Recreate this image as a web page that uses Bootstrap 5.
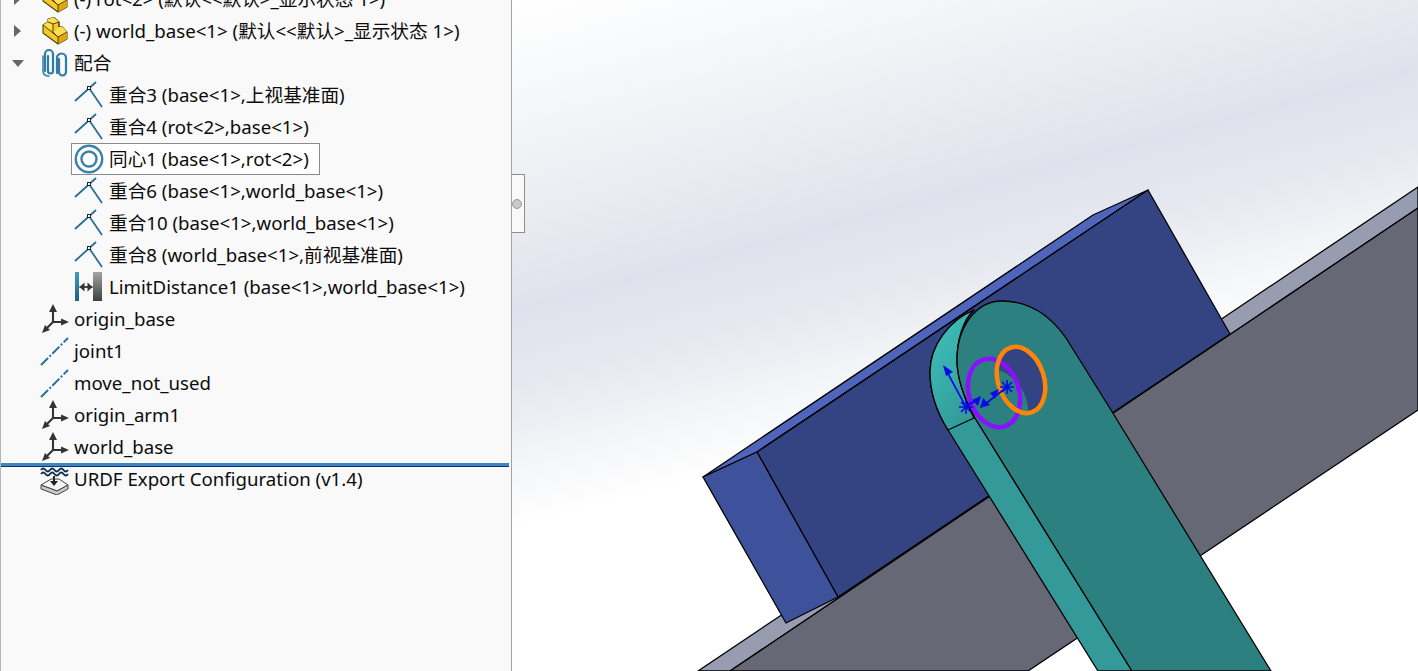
<!DOCTYPE html>
<html lang="zh">
<head>
  <meta charset="UTF-8">
  <title>配合 – 装配体</title>
  <link href="https://cdn.jsdelivr.net/npm/bootstrap@5.3.0/dist/css/bootstrap.min.css" rel="stylesheet">
  <style>
    body { background: #fff; }
    .app-shell { height: 671px; }
    .tree-panel {
      width: 512px;
      background: #f9f9f9;
      border-left: 1px solid #b4b4b4;
      border-right: 1px solid #a2a2a2;
      z-index: 2;
    }
    .tree-list {
      margin-top: -17px;
      font-family: "Noto Sans", "Noto Sans CJK SC", sans-serif;
      font-size: 18.67px;
      color: #0c0c0c;
      white-space: nowrap;
    }
    .tree-row { height: 32px; }
    .tree-caret { width: 33px; }
    .tree-indent { width: 68px; }
    .tree-indent-sel { width: 70px; }
    .tree-icon { width: 40px; }
    .tree-sel { width: 249px; height: 32px; background: #fff; border: 1px solid #8b8b8b; }
    .tree-sel .tree-icon { width: 37px; padding-left: 1px; }
    .tree-rule {
      position: relative;
      height: 4px;
      margin: 0 2px -4px 0;
      background: #3a88bd;
      border-bottom: 1px solid #14307c;
    }
    .panel-grip {
      position: absolute;
      top: 174px;
      left: 510px;
      width: 15px;
      height: 59px;
      background: #f9f9f9;
      border: 1px solid #8e8e8e;
      border-left: 0;
    }
    .panel-grip-dot {
      width: 10px;
      height: 10px;
      border-radius: 50%;
      background: #c9c9c9;
      border: 1px solid #999;
    }
    .model-view {
      background: linear-gradient(165deg, #fff 0, #f7f8fa 10%, #e9ebf1 25%, #dfe2ec 34%, #e6e8f0 42%, #f3f4f7 50%, #fff 58%);
    }
    .model-view svg { display: block; }
  </style>
</head>
<body class="overflow-hidden">

  <svg width="0" height="0" class="position-absolute">
    <defs>
      <symbol id="ic-part" viewBox="0 0 32 32">
        <path d="M5 10 10 7V4l6-1.500L21 7v5l3-.5 5 5.500v7l-9 5L5 18z" fill="#f5c92c" stroke="#5a4300" stroke-width="1.100" stroke-linejoin="round"/>
        <path d="M5 10 10 7V4l6-1.500L21 7l-6 2v4l-3 2zM15 17l6-5 3-.5 5 5.500-9 5z" fill="#ffdf50"/>
        <path d="M20 22l9-5v7l-9 5z" fill="#dfa70f"/>
        <path d="M5 10l15 12v7M20 22l9-5M15 9l6-2M15 9v8l5 5M10 7l5 2M21 7v5" fill="none" stroke="#5a4300" stroke-width="1"/>
      </symbol>
      <symbol id="ic-mates" viewBox="0 0 32 32">
        <g fill="none" stroke="#2f7da6" stroke-linecap="round">
          <path d="M7 24V7a4 4 0 0 1 8 0v17a2.500 2.500 0 0 1-5 0V9" stroke-width="2.200"/>
          <path d="M19 26V11a4.500 4.500 0 0 1 9 0v14a3.500 3.500 0 0 1-7 0V12" stroke-width="2.200"/>
          <path d="M5 9v15a5 5 0 0 0 6 5" stroke-width="1.500"/>
        </g>
      </symbol>
      <symbol id="ic-coincident" viewBox="0 0 32 32">
        <path d="M2 22 23 3M16 9 29 28" fill="none" stroke="#2b6f95" stroke-width="1.800"/>
        <rect x="14.500" y="7.500" width="3" height="3" fill="#fff" stroke="#222"/>
      </symbol>
      <symbol id="ic-concentric" viewBox="0 0 32 32">
        <circle cx="16" cy="16" r="13.200" fill="#fff" stroke="#3a80a8" stroke-width="2.400"/>
        <circle cx="16" cy="16" r="7.500" fill="#fff" stroke="#3a80a8" stroke-width="2.400"/>
      </symbol>
      <symbol id="ic-limit" viewBox="0 0 32 32">
        <rect x="2" y="1" width="4" height="29" fill="url(#gr-limit-blue)"/>
        <rect x="20" y="1" width="9" height="29" fill="url(#gr-limit-gray)"/>
        <path d="M6.500 16h13" stroke="#333" stroke-width="1.800"/>
        <path d="M6.500 16l5-4.500v9zM19.500 16l-5-4.500v9z" fill="#333"/>
      </symbol>
      <symbol id="ic-origin" viewBox="0 0 32 32">
        <path d="M15 19V6M15 19h12M15 19 8 26" stroke="#333" stroke-width="2.100" fill="none"/>
        <path d="M15 1l4 8h-8zM31 19l-8 3.500v-7zM4 30l3-8 5 5z" fill="#333"/>
      </symbol>
      <symbol id="ic-axis" viewBox="0 0 32 32">
        <path d="M3 30 30 3" stroke="#2a7297" stroke-width="2" stroke-dasharray="10 2 2 2" fill="none"/>
      </symbol>
      <symbol id="ic-urdf" viewBox="0 0 32 32">
        <path d="M3 7q2.200-3 4.500 0t4.500 0 4.500 0 4.500 0 4.500 0 4.500 0M3 11q2.200-3 4.500 0t4.500 0 4.500 0 4.500 0 4.500 0 4.500 0" fill="none" stroke="#12304f" stroke-width="1.800"/>
        <path d="M3 22 13 16h8l9 6-11 6z" fill="#f4f4f4" stroke="#444"/>
        <path d="M3 22v4l16 6 11-6v-4l-11 6z" fill="#c9c9c9" stroke="#444"/>
        <path d="M16 13v6" stroke="#222" stroke-width="2"/>
        <path d="M12 18h8l-4 5z" fill="#222"/>
      </symbol>
      <linearGradient id="gr-limit-blue" x1="0" y1="0" x2="0" y2="1">
        <stop offset="0" stop-color="#3d9cc4"/><stop offset="1" stop-color="#1f5f85"/>
      </linearGradient>
      <linearGradient id="gr-limit-gray" x1="0" y1="0" x2="0" y2="1">
        <stop offset="0" stop-color="#a4a4a4"/><stop offset="1" stop-color="#3f3f3f"/>
      </linearGradient>
    </defs>
  </svg>

  <div class="app-shell d-flex position-relative overflow-hidden">

    <!-- Дерево конструирования -->
    <aside class="tree-panel flex-shrink-0 overflow-hidden">
      <ul class="tree-list list-unstyled mb-0">
        <li class="tree-row d-flex align-items-center">
          <span class="tree-caret d-flex justify-content-center"><svg width="7" height="12"><path d="M0 0l7 6-7 6z" fill="#666"/></svg></span>
          <span class="tree-icon d-flex justify-content-center"><svg width="32" height="32"><use href="#ic-part"/></svg></span>
          <span>(-) rot&lt;2&gt; (默认&lt;&lt;默认&gt;_显示状态 1&gt;)</span>
        </li>
        <li class="tree-row d-flex align-items-center">
          <span class="tree-caret d-flex justify-content-center"><svg width="7" height="12"><path d="M0 0l7 6-7 6z" fill="#666"/></svg></span>
          <span class="tree-icon d-flex justify-content-center"><svg width="32" height="32"><use href="#ic-part"/></svg></span>
          <span>(-) world_base&lt;1&gt; (默认&lt;&lt;默认&gt;_显示状态 1&gt;)</span>
        </li>
        <li class="tree-row d-flex align-items-center">
          <span class="tree-caret d-flex justify-content-center"><svg width="12" height="7"><path d="M0 0h12L6 7z" fill="#666"/></svg></span>
          <span class="tree-icon d-flex justify-content-center"><svg width="32" height="32"><use href="#ic-mates"/></svg></span>
          <span>配合</span>
        </li>
        <li class="tree-row d-flex align-items-center">
          <span class="tree-indent"></span>
          <span class="tree-icon d-flex justify-content-center"><svg width="32" height="32"><use href="#ic-coincident"/></svg></span>
          <span>重合3 (base&lt;1&gt;,上视基准面)</span>
        </li>
        <li class="tree-row d-flex align-items-center">
          <span class="tree-indent"></span>
          <span class="tree-icon d-flex justify-content-center"><svg width="32" height="32"><use href="#ic-coincident"/></svg></span>
          <span>重合4 (rot&lt;2&gt;,base&lt;1&gt;)</span>
        </li>
        <li class="tree-row d-flex align-items-center">
          <span class="tree-indent-sel"></span>
          <span class="tree-sel d-flex align-items-center">
            <span class="tree-icon d-flex justify-content-start"><svg width="32" height="32"><use href="#ic-concentric"/></svg></span>
            <span>同心1 (base&lt;1&gt;,rot&lt;2&gt;)</span>
          </span>
        </li>
        <li class="tree-row d-flex align-items-center">
          <span class="tree-indent"></span>
          <span class="tree-icon d-flex justify-content-center"><svg width="32" height="32"><use href="#ic-coincident"/></svg></span>
          <span>重合6 (base&lt;1&gt;,world_base&lt;1&gt;)</span>
        </li>
        <li class="tree-row d-flex align-items-center">
          <span class="tree-indent"></span>
          <span class="tree-icon d-flex justify-content-center"><svg width="32" height="32"><use href="#ic-coincident"/></svg></span>
          <span>重合10 (base&lt;1&gt;,world_base&lt;1&gt;)</span>
        </li>
        <li class="tree-row d-flex align-items-center">
          <span class="tree-indent"></span>
          <span class="tree-icon d-flex justify-content-center"><svg width="32" height="32"><use href="#ic-coincident"/></svg></span>
          <span>重合8 (world_base&lt;1&gt;,前视基准面)</span>
        </li>
        <li class="tree-row d-flex align-items-center">
          <span class="tree-indent"></span>
          <span class="tree-icon d-flex justify-content-center"><svg width="32" height="32"><use href="#ic-limit"/></svg></span>
          <span>LimitDistance1 (base&lt;1&gt;,world_base&lt;1&gt;)</span>
        </li>
        <li class="tree-row d-flex align-items-center">
          <span class="tree-caret"></span>
          <span class="tree-icon d-flex justify-content-center"><svg width="32" height="32"><use href="#ic-origin"/></svg></span>
          <span>origin_base</span>
        </li>
        <li class="tree-row d-flex align-items-center">
          <span class="tree-caret"></span>
          <span class="tree-icon d-flex justify-content-center"><svg width="32" height="32"><use href="#ic-axis"/></svg></span>
          <span>joint1</span>
        </li>
        <li class="tree-row d-flex align-items-center">
          <span class="tree-caret"></span>
          <span class="tree-icon d-flex justify-content-center"><svg width="32" height="32"><use href="#ic-axis"/></svg></span>
          <span>move_not_used</span>
        </li>
        <li class="tree-row d-flex align-items-center">
          <span class="tree-caret"></span>
          <span class="tree-icon d-flex justify-content-center"><svg width="32" height="32"><use href="#ic-origin"/></svg></span>
          <span>origin_arm1</span>
        </li>
        <li class="tree-row d-flex align-items-center">
          <span class="tree-caret"></span>
          <span class="tree-icon d-flex justify-content-center"><svg width="32" height="32"><use href="#ic-origin"/></svg></span>
          <span>world_base</span>
        </li>
        <li class="tree-rule"></li>
        <li class="tree-row d-flex align-items-center">
          <span class="tree-caret"></span>
          <span class="tree-icon d-flex justify-content-center"><svg width="32" height="32"><use href="#ic-urdf"/></svg></span>
          <span>URDF Export Configuration (v1.4)</span>
        </li>
      </ul>
    </aside>

    <!-- Ручка панели -->
    <div class="panel-grip d-flex align-items-center justify-content-center">
      <span class="panel-grip-dot"></span>
    </div>

    <!-- Графическая область -->
    <main class="model-view flex-grow-1">
      <svg width="906" height="671" viewBox="512 0 906 671">
        <defs>
          <linearGradient id="gr-arm-top" x1="0.1" y1="0" x2="0.6" y2="1">
            <stop offset="0" stop-color="#40c2bc"/><stop offset="1" stop-color="#339b99"/>
          </linearGradient>
          <mask id="mask-hole" maskUnits="userSpaceOnUse" x="512" y="0" width="906" height="671">
            <rect x="512" y="0" width="906" height="671" fill="#fff"/>
            <ellipse cx="994" cy="393" rx="25" ry="35" transform="rotate(-18 994 393)" fill="#000"/>
          </mask>
        </defs>
        <g stroke="#000" stroke-width="1.300" stroke-linejoin="round">
          <!-- основание -->
          <path d="M1418 187 1223 318 780 616 698 671H730L1418 208z" fill="#989cb0"/>
          <path d="M1418 208 730 671H1028L1418 410z" fill="#666875"/>
          <!-- блок -->
          <path d="M703 477 1093 215 1148 190 757 452z" fill="#4f65bb"/>
          <path d="M757 452 1148 190 1230 334 838 597z" fill="#344482"/>
          <path d="M703 477 757 452 838 597 786 623z" fill="#3e519b"/>
          <!-- рычаг -->
          <path d="M974 310C950 320 930 345 930 372 930 395 938 414 948 430L1098 671H1132L975 418C963 396 957 378 957 360 957 340 963 320 974 310z" fill="#339a99"/>
          <path d="M974 310C950 320 930 345 930 372 930 395 938 414 948 430L974 418C963 396 957 378 957 360 957 340 963 320 974 310z" fill="url(#gr-arm-top)"/>
          <path d="M1002 301C975 301 957 328 957 360 957 378 963 396 975 418L1132 671H1271L1111 410 1066 338C1050 315 1028 301 1002 301z" fill="#2d8080"/>
        </g>
        <!-- отверстие и кромки -->
        <ellipse cx="1021" cy="380" rx="23" ry="34" transform="rotate(-18 1021 380)" fill="#344482" mask="url(#mask-hole)"/>
        <ellipse cx="994" cy="393" rx="25" ry="35" transform="rotate(-18 994 393)" fill="none" stroke="#8a10ff" stroke-width="4.500"/>
        <ellipse cx="1021" cy="380" rx="23" ry="34" transform="rotate(-18 1021 380)" fill="none" stroke="#ff8408" stroke-width="4.500"/>
        <!-- триады -->
        <g stroke="#0a0ae6" stroke-width="1.600" fill="#0a0ae6">
          <path d="M966 407 946 370M966 407 978 399M1007 387 984 405"/>
          <path d="M943 365l10 7-7 4zM981 396l-3 10-6-6zM980 408l3-10 7 7zM999 389l-9 4 5 6z" stroke="none"/>
          <path d="M959 407h14M966 400v14M961 402l10 10M971 402l-10 10M1000 387h14M1007 380v14M1002 382l10 10M1012 382l-10 10"/>
        </g>
      </svg>
    </main>
  </div>

  <script src="https://cdn.jsdelivr.net/npm/bootstrap@5.3.0/dist/js/bootstrap.bundle.min.js"></script>
</body>
</html>
